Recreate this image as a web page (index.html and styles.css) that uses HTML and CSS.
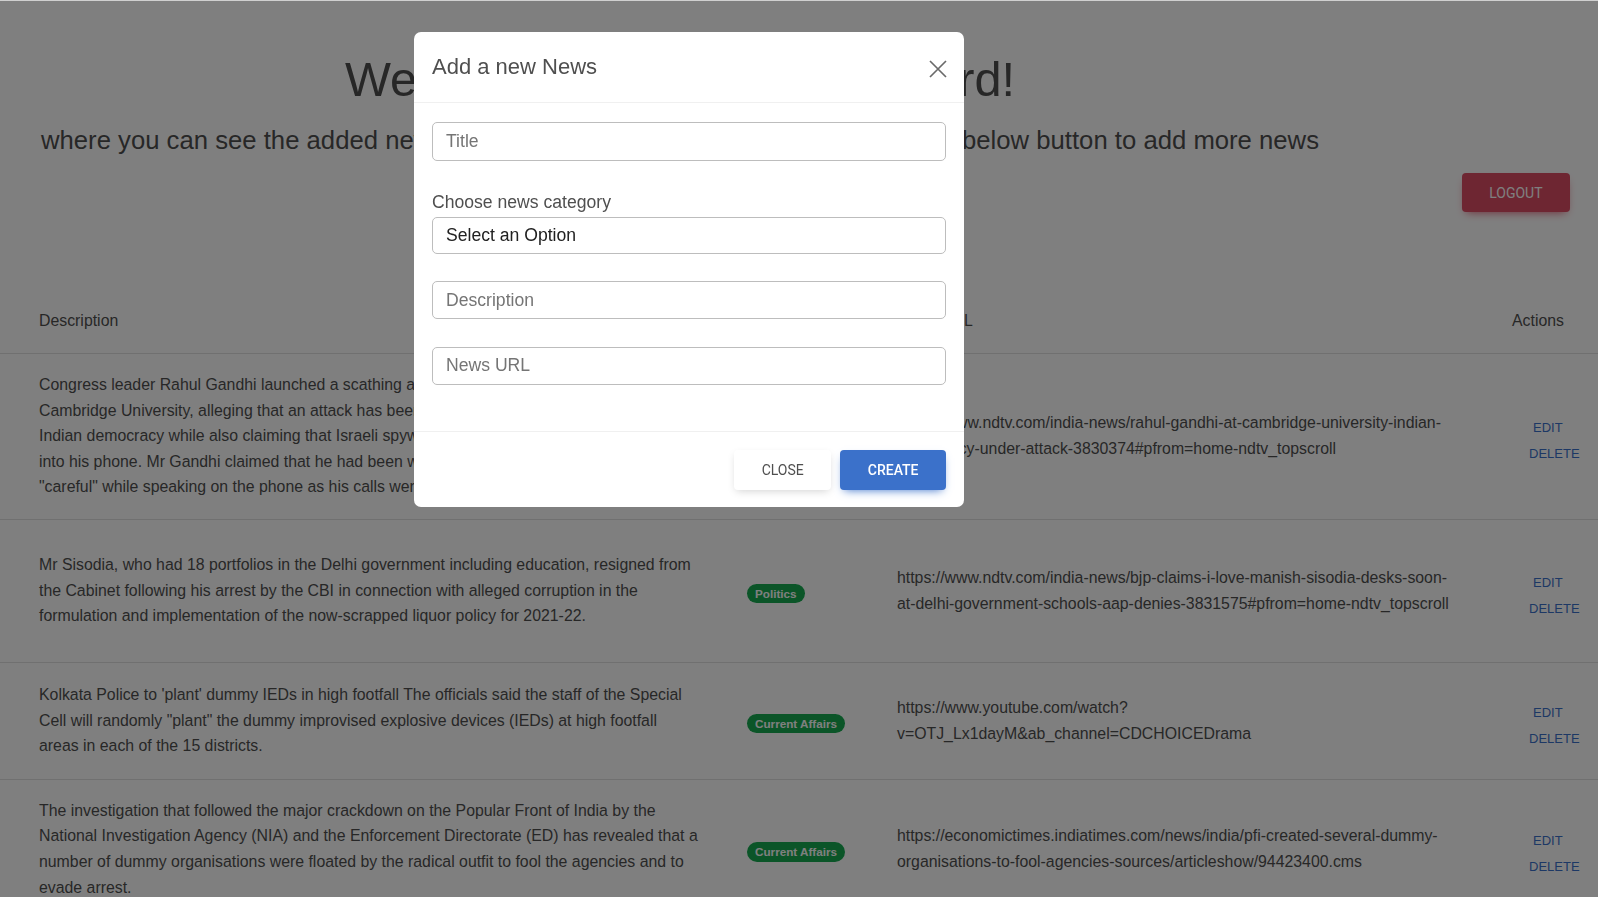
FILE: index.html
```html
<!DOCTYPE html>
<html lang="en">
<head>
<meta charset="utf-8">
<title>News Dashboard</title>
<link rel="stylesheet" href="styles.css">
</head>
<body>
<div class="page">
  <header class="top">
    <div class="intro">
      <h1 class="welcome">Welcome to Admin Dashboard!</h1>
      <p class="sub">where you can see the added news, edit or delete them and you can click on the below button to add more news</p>
    </div>
    <div class="side">
      <button class="btn btn-danger">Logout</button>
    </div>
  </header>

  <table class="news">
    <colgroup>
      <col class="c-desc">
      <col class="c-cat">
      <col class="c-url">
      <col class="c-act">
    </colgroup>
    <thead>
      <tr>
        <th class="desc">Description</th>
        <th class="cat">Category</th>
        <th class="url">News URL</th>
        <th class="act">Actions</th>
      </tr>
    </thead>
    <tbody>
      <tr class="r1">
        <td class="desc">Congress leader Rahul Gandhi launched a scathing attack on the BJP-led government at Cambridge University, alleging that an attack has been mounted on the basic structure of Indian democracy while also claiming that Israeli spyware Pegasus was being used to snoop into his phone. Mr Gandhi claimed that he had been warned by intelligence officials to be "careful" while speaking on the phone as his calls were being recorded.</td>
        <td class="cat"><span class="badge">Politics</span></td>
        <td class="url">https://www.ndtv.com/india-news/rahul-gandhi-at-cambridge-university-indian-democracy-under-attack-3830374#pfrom=home-ndtv_topscroll</td>
        <td class="act"><div class="actions"><a class="link edit">Edit</a><a class="link">Delete</a></div></td>
      </tr>
      <tr class="r2">
        <td class="desc">Mr Sisodia, who had 18 portfolios in the Delhi government including education, resigned from the Cabinet following his arrest by the CBI in connection with alleged corruption in the formulation and implementation of the now-scrapped liquor policy for 2021-22.</td>
        <td class="cat"><span class="badge">Politics</span></td>
        <td class="url">https://www.ndtv.com/india-news/bjp-claims-i-love-manish-sisodia-desks-soon-at-delhi-government-schools-aap-denies-3831575#pfrom=home-ndtv_topscroll</td>
        <td class="act"><div class="actions"><a class="link edit">Edit</a><a class="link">Delete</a></div></td>
      </tr>
      <tr class="r3">
        <td class="desc">Kolkata Police to 'plant' dummy IEDs in high footfall The officials said the staff of the Special Cell will randomly "plant" the dummy improvised explosive devices (IEDs) at high footfall areas in each of the 15 districts.</td>
        <td class="cat"><span class="badge">Current Affairs</span></td>
        <td class="url">https://www.youtube.com/watch?v=OTJ_Lx1dayM&amp;ab_channel=CDCHOICEDrama</td>
        <td class="act"><div class="actions"><a class="link edit">Edit</a><a class="link">Delete</a></div></td>
      </tr>
      <tr class="r4">
        <td class="desc">The investigation that followed the major crackdown on the Popular Front of India by the National Investigation Agency (NIA) and the Enforcement Directorate (ED) has revealed that a number of dummy organisations were floated by the radical outfit to fool the agencies and to evade arrest.</td>
        <td class="cat"><span class="badge">Current Affairs</span></td>
        <td class="url">https://economictimes.indiatimes.com/news/india/pfi-created-several-dummy-organisations-to-fool-agencies-sources/articleshow/94423400.cms</td>
        <td class="act"><div class="actions"><a class="link edit">Edit</a><a class="link">Delete</a></div></td>
      </tr>
    </tbody>
  </table>
</div>

<div class="backdrop">
  <div class="modal">
    <div class="modal-head">
      <h5 class="modal-title">Add a new News</h5>
      <button class="x-btn" aria-label="Close">
        <svg width="18" height="18" viewBox="0 0 18 18"><path d="M1 1 L17 17 M17 1 L1 17" stroke="#6a6a6a" stroke-width="1.7" fill="none"/></svg>
      </button>
    </div>
    <div class="modal-body">
      <div class="field">
        <input class="input h39" type="text" placeholder="Title">
      </div>
      <div class="field">
        <label class="label">Choose news category</label>
        <select class="input select h37">
          <option>Select an Option</option>
          <option>Politics</option>
          <option>Current Affairs</option>
        </select>
      </div>
      <div class="field">
        <input class="input h38" type="text" placeholder="Description">
      </div>
      <div class="field">
        <input class="input h38" type="text" placeholder="News URL">
      </div>
    </div>
    <div class="modal-foot">
      <button class="btn btn-light">Close</button>
      <button class="btn btn-primary">Create</button>
    </div>
  </div>
</div>
</body>
</html>
```

FILE: styles.css
```css
html, body {
  margin: 0;
  height: 100%;
  overflow: hidden;
}

body {
  font-family: "Liberation Sans", Arial, sans-serif;
  color: #4f4f4f;
  background: #fff;
  border-top: 1px solid #d0d0d0;
  box-sizing: border-box;
}

/* ---------- top header ---------- */
.top {
  display: flex;
  height: 289px;
}

.intro {
  width: 1360px;
  flex: none;
  text-align: center;
}

.welcome {
  margin: 50px 0 0;
  font-size: 48.7px;
  line-height: 57.6px;
  font-weight: 400;
}

.sub {
  margin: 16px 0 0;
  font-size: 25.7px;
  line-height: 30.7px;
  white-space: nowrap;
}

.side {
  flex: 1;
  display: flex;
  justify-content: flex-end;
  align-items: flex-start;
  padding: 172px 28px 0 0;
}

/* ---------- buttons ---------- */
.btn {
  font-family: Roboto, "Liberation Sans", sans-serif;
  font-weight: 500;
  font-size: 14px;
  text-transform: uppercase;
  height: 40px;
  padding: 0 27.5px;
  border: 0;
  border-radius: 4px;
  cursor: pointer;
}

.btn-danger {
  height: 39px;
  background: #dc4c64;
  color: #fff;
  font-weight: 400;
  box-shadow: 0 4px 9px -4px #dc4c64;
}

.btn-primary {
  background: #3b71ca;
  color: #fff;
  box-shadow: 0 4px 9px -4px #3b71ca;
}

.btn-light {
  background: #fff;
  color: #4f4f4f;
  font-weight: 400;
  box-shadow: 0 3px 8px -2px rgba(0, 0, 0, 0.18);
}

/* ---------- table ---------- */
.news {
  width: 100%;
  table-layout: fixed;
  border-collapse: separate;
  border-spacing: 0;
  font-size: 15.85px;
  line-height: 25.6px;
}

.c-desc { width: 727px; }
.c-cat { width: 150px; }
.c-url { width: 598px; }
.c-act { width: 123px; }

.news th,
.news td {
  padding: 0;
  text-align: left;
  vertical-align: middle;
  border-bottom: 1px solid #e0e0e0;
}

.news th {
  font-weight: 400;
  height: 62.5px;
}

.news .desc { padding: 0 27px 0 39px; }
.news .cat { padding-left: 20px; }
.news .url { padding: 0 20px; }
.news th.act { padding-left: 37px; }
.news td.act { padding-left: 54px; }

.r1 td { height: 165px; }
.r2 td { height: 142px; }
.r3 td { height: 116px; }
.r4 td { height: 139px; }

.actions { padding-top: 10px; }

.badge {
  display: inline-block;
  background: #16ab51;
  color: #fff;
  font-weight: 700;
  font-size: 11.7px;
  line-height: 19.5px;
  padding: 0 8px;
  border-radius: 10rem;
  vertical-align: -2px;
}

.link {
  display: block;
  color: #3b71ca;
  font-size: 13px;
  text-transform: uppercase;
  cursor: pointer;
}

.link.edit { padding-left: 4px; }

/* ---------- modal ---------- */
.backdrop {
  position: fixed;
  top: 1px;
  left: 0;
  right: 0;
  bottom: 0;
  background: rgba(0, 0, 0, 0.5);
}

.modal {
  margin: 31px 0 0 414px;
  width: 550px;
  background: #fff;
  border-radius: 7px;
}

.modal-head {
  display: flex;
  align-items: center;
  justify-content: space-between;
  height: 70px;
  padding: 0 17px 0 18px;
  border-bottom: 1px solid #f0f0f0;
}

.modal-title {
  margin: 0;
  font-size: 22px;
  line-height: 26.4px;
  font-weight: 400;
  color: #4f4f4f;
}

.x-btn {
  display: flex;
  padding: 0;
  margin: 3px 0 0;
  border: 0;
  background: none;
}

.modal-body {
  padding: 19px 18px 19px;
}

.field { margin-bottom: 27.5px; }

.input {
  display: block;
  width: 100%;
  box-sizing: border-box;
  border: 1px solid #bdbdbd;
  border-radius: 5px;
  padding: 0 13px;
  font-family: "Liberation Sans", Arial, sans-serif;
  font-size: 17.6px;
  color: #4f4f4f;
  background: #fff;
  outline: none;
}

.input::placeholder { color: #757575; }

.h39 { height: 39px; }
.h38 { height: 38px; }
.h37 { height: 37px; }

.select {
  appearance: none;
  -webkit-appearance: none;
  color: #212121;
}

.label {
  display: block;
  font-size: 17.6px;
  line-height: 26.4px;
  margin-bottom: 2px;
  color: #4f4f4f;
}

.modal-foot {
  display: flex;
  justify-content: flex-end;
  gap: 9px;
  padding: 18px 18px 17px;
  border-top: 1px solid #f0f0f0;
}
```
